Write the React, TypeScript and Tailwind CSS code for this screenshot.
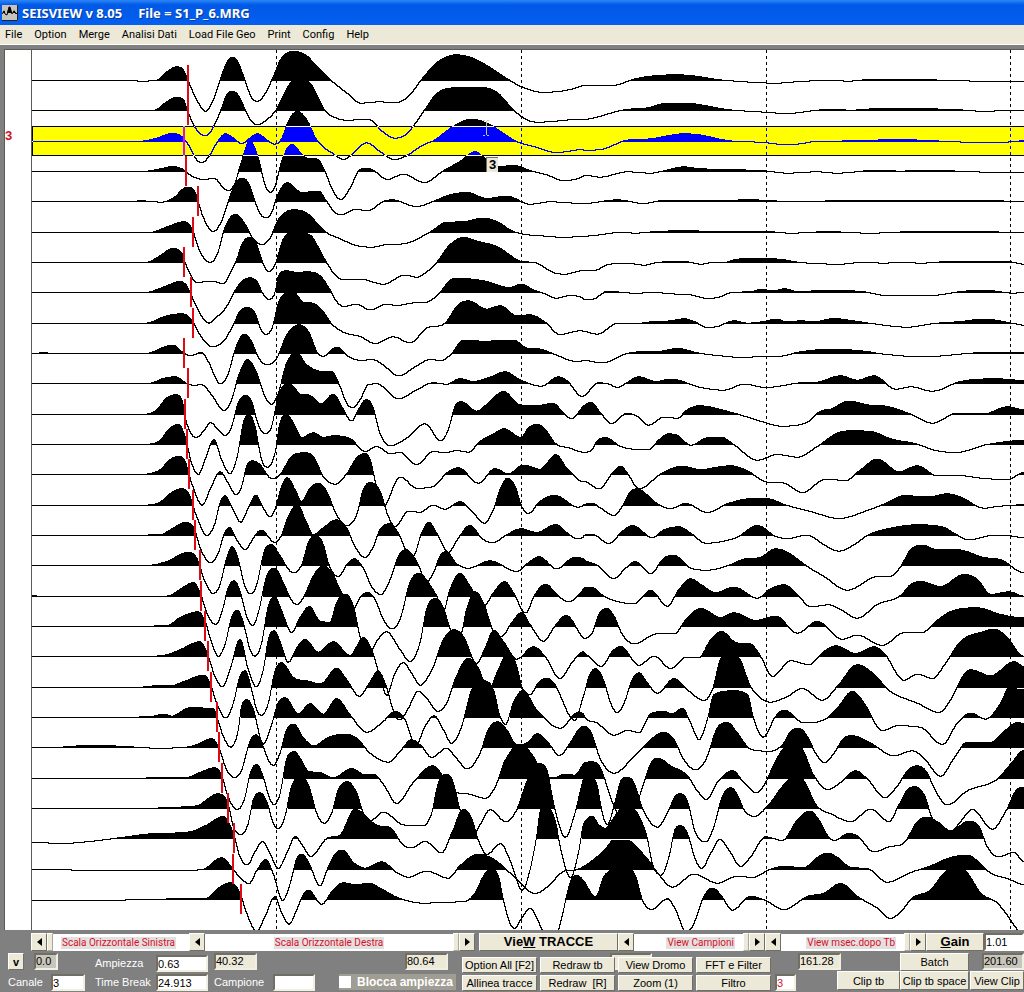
import { useState, type ReactNode } from "react";

// Readings are in thirds of a plot pixel: "x y x y ...".
// `near` starts at plot x 118, `far` at plot x 552; `zero` is the rest level.
type Trace = { zero: number; tb: number; near: string; far: string };

const TRACES: Trace[] = [
  {
    zero: 107,
    tb: 188,
    near: "-354 107 -70 107 -20 109 10 107 25 104 55 78 80 66 100 76 114 107 140 165 167 199 190 165 210 107 230 55 247 37 265 55 285 107 303 155 321 170 340 155 365 107 395 40 433 20 470 33 500 65 540 104 590 144 632 175 690 171 735 174 775 155 815 104 865 50 920 30 975 43 1075 104 1115 126 1175 142 1215 141 1300 122",
    far: "0 121 90 121 150 103 200 94 275 90 320 92 400 104 500 112 575 115 650 110 740 106 790 109 870 103 990 103 1115 108 1320 109",
  },
  {
    zero: 200,
    tb: 188,
    near: "-354 200 -60 200 5 200 20 197 45 178 80 161 100 168 112 200 140 258 167 276 190 250 212 200 230 155 247 142 265 155 287 200 305 233 323 242 345 232 377 200 420 120 452 107 480 118 525 200 560 223 590 229 655 227 700 265 735 283 770 270 800 233 823 200 860 150 920 132 1000 132 1040 145 1092 200 1135 230 1165 235 1300 226",
    far: "0 227 30 222 120 198 190 192 250 178 310 178 350 183 430 197 540 205 610 209 700 199 740 196 800 199 900 193 970 194 1110 197 1210 203 1260 199 1320 200",
  },
  {
    zero: 290,
    tb: 184,
    near: "-354 290 -30 289 20 280 65 266 95 275 115 300 140 345 157 353 180 330 203 290 227 267 250 280 275 296 300 280 322 267 350 285 373 298 393 285 420 220 442 200 470 225 500 285 550 327 582 344 610 325 650 294 690 320 732 344 765 335 820 300 850 288 910 245 965 223 1010 235 1100 290 1150 305 1220 323 1300 314",
    far: "0 316 45 315 130 286 200 282 300 267 345 270 430 287 540 293 600 299 650 297 700 289 850 288 920 283 1050 288 1160 292 1260 292 1320 288",
  },
  {
    zero: 380,
    tb: 186,
    near: "-354 380 -30 380 0 378 40 370 68 365 95 372 125 393 155 403 195 402 220 430 235 437 255 415 270 365 300 289 325 340 345 420 361 443 375 425 395 350 425 299 465 338 505 345 525 380 550 440 572 464 600 430 625 380 652 370 675 380 712 404 760 388 823 413 880 378 930 350 975 321 1010 345 1050 365 1090 362 1140 377 1190 390 1240 407 1300 393",
    far: "0 391 48 397 130 381 200 385 240 378 300 366 340 371 430 374 540 378 610 385 700 381 760 385 870 377 920 377 950 380 980 377 1080 377 1150 381 1320 382",
  },
  {
    zero: 472,
    tb: 198,
    near: "-354 472 -60 472 -25 470 5 472 35 474 50 471 70 462 112 429 135 445 160 520 190 562 215 530 235 472 255 420 277 402 297 420 315 472 330 508 348 521 365 505 380 460 412 416 455 445 505 441 530 472 555 505 573 512 615 496 655 499 700 472 725 467 800 487 850 472 890 455 950 445 1010 463 1070 456 1140 480 1200 473 1300 478",
    far: "0 478 100 467 180 478 230 470 290 470 360 470 500 467 600 471 850 470 1100 470 1200 469 1320 472",
  },
  {
    zero: 563,
    tb: 193,
    near: "-354 563 0 563 15 560 60 543 102 531 125 550 150 620 181 653 205 620 220 563 240 520 258 509 280 530 312 585 337 599 360 580 385 525 430 495 470 505 525 560 570 582 620 602 665 607 710 599 760 597 840 562 890 532 940 531 1000 520 1040 530 1090 560 1200 575 1245 578 1300 574",
    far: "0 574 120 562 150 565 220 560 320 557 380 561 545 560 620 565 740 560 790 563 860 565 1000 560 1190 560 1320 564",
  },
  {
    zero: 653,
    tb: 184,
    near: "-354 653 -20 653 0 650 35 630 68 611 95 625 110 665 140 713 185 709 220 716 245 675 258 650 278 595 297 579 320 600 338 653 356 681 375 660 400 583 430 564 475 568 525 645 555 690 580 705 630 703 700 718 765 691 800 697 825 685 860 653 900 600 940 578 985 590 1040 605 1115 650 1155 653 1210 683 1245 688 1300 677",
    far: "0 677 30 677 70 660 130 655 180 661 220 653 300 650 350 658 390 652 420 654 450 645 530 640 600 645 640 652 770 658 840 652 900 655 950 652 1010 655 1100 650 1270 650 1320 658",
  },
  {
    zero: 68,
    tb: 191,
    near: "-354 68 -20 68 0 66 50 48 88 35 110 48 130 90 155 140 177 160 200 142 230 110 252 68 275 35 300 24 320 35 338 70 356 89 375 68 385 20 410 3 440 8 470 6 510 18 540 60 560 95 582 110 620 103 660 120 710 103 740 107 790 99 830 97 870 68 900 32 920 25 1000 33 1080 53 1115 43 1150 60 1180 70 1220 85 1260 77 1300 86",
    far: "0 88 25 88 70 65 110 67 160 71 200 67 260 72 320 75 370 86 400 83 450 67 500 66 530 59 570 63 600 57 640 65 740 61 840 66 900 76 1050 76 1140 64 1210 62 1290 70 1320 67",
  },
  {
    zero: 161,
    tb: 193,
    near: "-354 161 -30 161 0 158 50 138 95 132 125 150 150 195 185 230 220 215 250 165 270 125 292 113 315 130 333 180 348 194 368 170 385 100 405 72 430 68 460 97 490 101 515 120 545 162 580 187 630 200 675 221 730 201 780 219 830 175 885 160 925 105 955 93 1010 118 1050 108 1100 138 1140 135 1185 157 1230 194 1290 183",
    far: "0 184 40 193 100 161 150 162 200 156 260 153 300 147 330 155 370 173 400 170 450 153 490 160 540 155 575 148 610 156 650 153 690 156 750 146 800 152 870 162 970 172 1050 161 1130 155 1200 148 1290 161 1320 166",
  },
  {
    zero: 250,
    tb: 184,
    near: "-354 250 -320 248 -280 250 -30 250 0 248 40 232 68 225 100 248 120 257 155 247 175 275 211 341 235 310 255 240 282 192 305 215 325 262 352 284 380 265 410 195 448 164 475 185 505 252 520 258 560 231 600 262 630 270 670 269 700 285 745 317 800 287 840 268 875 271 905 250 940 210 1000 213 1090 210 1130 234 1170 237 1220 255 1275 273 1300 272",
    far: "0 271 55 278 130 250 190 244 215 245 280 235 340 248 400 256 480 262 540 258 580 259 650 245 740 237 840 243 900 252 1020 260 1150 250 1210 246 1320 248",
  },
  {
    zero: 341,
    tb: 188,
    near: "-354 341 0 340 40 326 75 321 110 341 130 346 155 345 185 375 222 422 245 390 265 320 293 270 320 310 345 380 365 403 385 370 410 280 440 250 470 285 510 304 545 305 570 350 590 400 608 413 630 390 655 345 680 342 745 387 800 360 850 339 890 343 930 327 970 335 1020 322 1065 306 1110 330 1175 349 1225 321 1250 332 1297 380",
    far: "0 378 45 339 75 343 100 353 125 341 165 321 215 335 260 328 350 353 420 361 480 343 545 353 650 339 700 337 770 318 820 331 870 318 935 358 980 351 1045 364 1130 335 1240 327 1320 332",
  },
  {
    zero: 434,
    tb: 185,
    near: "-354 434 -20 434 20 420 50 385 75 375 95 390 110 460 138 503 160 485 182 459 205 480 226 497 245 470 265 400 288 377 305 395 325 465 346 491 365 470 385 380 410 342 430 350 450 373 480 377 513 403 550 373 575 410 605 453 625 420 648 390 668 410 690 490 720 528 770 505 825 462 872 513 895 480 915 410 935 396 980 424 1020 395 1060 365 1110 405 1160 407 1210 401 1240 430 1265 446 1300 410",
    far: "0 408 22 398 50 430 82 461 130 430 160 440 193 466 240 442 280 445 310 420 345 408 450 430 540 457 590 469 670 457 710 424 740 418 795 394 850 405 910 410 980 433 1045 460 1120 430 1200 432 1270 411 1320 420",
  },
  {
    zero: 524,
    tb: 187,
    near: "-354 524 -10 523 30 512 60 475 85 464 105 500 125 580 145 614 165 570 192 510 215 570 240 611 262 560 280 460 297 434 315 470 335 570 352 592 375 550 390 460 410 434 430 460 455 503 490 489 520 503 550 498 600 506 645 545 680 530 720 551 750 548 800 584 850 545 885 549 920 542 955 547 990 515 1035 490 1062 477 1113 503 1135 475 1160 464 1185 478 1215 520 1260 535 1300 547",
    far: "0 547 20 543 45 508 65 504 110 530 150 538 195 539 225 510 255 492 280 497 320 526 370 504 410 502 450 525 520 571 580 554 640 562 700 530 760 490 800 483 860 485 920 507 1000 523 1050 541 1115 548 1210 524 1320 512",
  },
  {
    zero: 614,
    tb: 189,
    near: "-354 614 -20 614 0 611 30 600 60 570 85 560 105 575 125 640 157 706 180 660 210 606 235 640 257 674 275 650 290 590 308 573 330 585 365 626 390 615 425 560 465 549 490 560 520 620 555 643 590 612 620 565 645 551 660 570 680 650 703 707 715 690 735 640 752 622 800 655 850 650 890 610 925 594 985 640 1035 597 1075 612 1120 586 1170 598 1218 555 1250 595 1300 635",
    far: "0 635 45 657 85 610 110 590 130 610 165 657 230 613 295 589 350 600 400 592 440 588 490 603 545 636 600 640 655 668 725 628 785 632 830 600 880 568 945 606 1000 588 1060 618 1120 617 1200 626 1270 629 1320 608",
  },
  {
    zero: 47,
    tb: 193,
    near: "-354 47 -20 46 30 37 60 12 95 -3 115 10 140 80 170 137 195 100 210 40 225 18 245 50 272 97 295 55 318 17 340 55 360 80 378 50 395 -10 412 -36 435 0 455 35 480 -5 505 -20 530 5 560 75 590 107 620 75 640 0 662 -22 690 5 715 80 735 110 775 65 810 67 850 46 885 58 930 36 970 70 1003 100 1030 60 1050 0 1073 -35 1095 -10 1115 50 1135 71 1170 35 1215 17 1285 52 1300 47",
    far: "0 45 25 41 50 55 90 77 115 50 140 5 160 -3 185 12 220 42 260 56 305 41 370 68 430 42 500 26 540 25 610 47 680 65 765 86 850 62 900 43 960 18 1040 20 1090 12 1130 22 1200 55 1240 50 1320 45",
  },
  {
    zero: 137,
    tb: 195,
    near: "-354 137 30 135 65 118 105 98 130 112 155 185 182 218 205 190 222 135 238 113 260 150 286 180 310 145 333 121 375 158 395 135 415 80 442 45 470 100 490 135 515 118 560 90 590 115 615 170 645 203 670 170 690 120 718 102 745 130 770 185 790 197 815 130 837 98 860 130 895 187 925 145 960 107 995 145 1027 159 1070 135 1113 117 1160 128 1218 104 1250 128 1280 146 1300 142",
    far: "0 137 25 134 75 161 115 125 145 107 205 143 240 120 285 111 320 130 365 160 460 142 520 107 575 140 610 146 670 136 720 165 765 184 810 165 850 137 920 115 1000 105 1080 113 1110 130 1155 150 1230 136 1270 137 1320 143",
  },
  {
    zero: 227,
    tb: 200,
    near: "-354 227 0 226 50 215 115 188 140 205 165 275 190 311 210 285 230 205 247 171 265 210 285 290 303 312 320 285 345 180 365 165 385 190 430 249 455 225 475 160 495 135 520 165 535 220 565 261 590 225 612 207 640 235 665 290 692 314 720 270 745 200 768 180 800 215 830 275 850 250 870 200 888 185 920 222 955 235 1020 213 1100 245 1140 215 1167 201 1220 237 1275 202 1300 208",
    far: "0 210 40 227 90 266 125 235 153 215 200 251 240 205 270 197 320 235 370 241 430 228 480 208 530 202 575 177 605 185 670 230 720 260 790 301 880 260 920 259 950 230 980 180 1015 166 1060 180 1120 180 1200 203 1250 210 1320 248",
  },
  {
    zero: 321,
    tb: 201,
    near: "-354 319 -310 321 0 322 60 318 90 300 130 280 150 310 175 380 197 405 215 370 235 295 252 274 270 305 290 380 308 407 325 370 350 260 373 236 400 280 420 325 440 345 460 325 490 260 520 228 545 250 580 320 612 355 630 325 652 309 675 330 700 390 725 418 750 390 780 280 808 251 835 280 860 320 880 365 900 300 930 252 960 290 1000 352 1030 310 1065 277 1090 310 1127 370 1155 315 1187 284 1220 315 1255 337 1300 300",
    far: "0 297 20 293 60 320 100 336 150 343 200 303 250 350 285 300 320 268 350 285 395 309 450 293 520 326 560 298 600 286 640 315 680 352 735 346 770 360 820 386 880 345 950 318 980 285 1010 276 1070 291 1140 255 1180 270 1220 315 1275 307 1320 320",
  },
  {
    zero: 411,
    tb: 205,
    near: "-354 411 50 409 90 385 143 367 165 395 185 460 205 500 225 465 245 385 262 363 280 400 300 480 315 500 335 460 355 350 375 323 395 365 425 429 450 385 478 352 510 395 540 398 560 340 587 315 610 350 630 440 655 500 680 455 710 427 750 480 780 516 810 460 830 360 857 327 880 355 905 425 932 432 950 360 975 307 1000 340 1030 425 1055 440 1085 400 1115 370 1140 405 1180 455 1215 410 1248 378 1300 445",
    far: "0 446 25 430 45 375 68 357 90 380 115 435 150 463 220 433 270 433 310 385 350 357 410 384 450 370 515 393 575 380 640 431 700 396 775 449 820 437 895 468 960 430 1010 430 1070 385 1100 366 1180 355 1250 375 1320 385",
  },
  {
    zero: 500,
    tb: 208,
    near: "-354 500 0 499 50 495 90 480 150 456 175 500 195 560 217 590 240 540 270 449 295 540 318 590 340 540 355 450 373 423 390 455 415 517 440 475 465 449 505 487 550 456 600 497 640 444 665 480 690 560 710 616 735 550 760 519 785 550 810 586 850 530 880 450 912 420 940 440 980 521 1005 475 1032 422 1060 455 1100 508 1150 471 1185 500 1230 566 1265 520 1300 486",
    far: "0 488 20 505 52 530 85 485 110 470 165 526 210 499 260 536 305 503 345 503 380 450 412 425 455 458 500 463 530 500 565 560 620 513 675 524 720 485 755 468 815 491 870 471 900 490 960 571 1000 553 1045 566 1085 520 1130 455 1200 425 1230 418 1265 438 1320 500",
  },
  {
    zero: 593,
    tb: 211,
    near: "-354 592 -30 592 20 588 60 588 110 572 160 556 180 580 200 640 227 684 250 640 270 560 285 543 305 600 320 660 335 677 355 640 375 545 395 519 430 563 470 573 512 582 560 536 590 570 628 619 655 585 685 545 705 580 735 675 750 690 775 655 805 604 830 625 863 664 890 640 915 570 955 506 985 535 1015 600 1045 540 1075 485 1100 530 1115 590 1140 614 1165 580 1190 565 1215 585 1260 680 1275 692 1300 620",
    far: "0 615 15 560 35 537 60 575 80 640 100 668 120 640 145 570 165 549 190 580 220 610 270 567 310 600 360 632 385 600 412 505 437 495 465 505 500 590 560 637 610 620 655 596 715 631 760 590 820 525 860 545 920 605 1000 640 1065 668 1100 630 1140 555 1160 540 1220 558 1290 516 1320 530",
  },
  {
    zero: 683,
    tb: 217,
    near: "-354 683 0 681 40 673 65 679 120 654 190 657 202 685 220 740 243 772 265 720 275 650 292 630 310 660 340 763 360 720 385 640 405 624 445 672 480 642 520 673 560 627 600 675 650 727 700 695 735 665 765 690 797 767 825 710 852 678 880 720 905 760 935 710 965 600 1000 573 1030 600 1050 680 1067 703 1090 640 1118 602 1160 660 1230 715 1285 668 1300 672",
    far: "0 678 40 700 90 736 130 722 165 728 200 672 240 665 265 672 295 656 320 700 345 749 370 690 390 615 450 603 490 615 510 690 537 742 575 680 600 661 660 699 720 690 760 655 805 605 840 640 880 710 895 722 940 708 1010 713 1075 764 1120 700 1160 670 1205 688 1250 640 1275 595 1320 600",
  },
  {
    zero: 113,
    tb: 219,
    near: "-354 113 -270 112 -170 106 -60 111 20 115 80 114 130 108 185 87 205 110 230 180 255 203 275 180 300 95 318 75 335 100 355 150 370 167 390 130 410 60 432 44 460 85 492 108 535 83 580 73 620 85 660 130 715 157 750 125 785 90 815 110 845 143 890 115 915 140 952 177 990 130 1015 60 1043 36 1070 60 1100 105 1130 100 1163 72 1195 100 1228 137 1260 100 1290 55",
    far: "0 50 20 65 50 150 90 190 150 140 200 90 238 68 270 90 300 150 335 180 365 150 400 55 430 38 460 70 500 118 560 124 595 105 625 60 645 56 670 80 695 130 722 159 750 130 780 85 805 78 860 100 930 138 985 123 1020 145 1070 199 1110 145 1150 97 1220 98 1260 65 1300 39 1320 40",
  },
  {
    zero: 203,
    tb: 222,
    near: "-354 202 80 201 120 198 150 185 195 171 215 195 235 260 262 296 285 260 300 190 320 161 340 200 358 260 372 281 390 250 410 145 433 123 455 150 475 182 510 185 550 201 605 173 645 192 670 191 700 220 740 278 790 215 848 165 885 205 915 245 950 248 1005 262 1035 230 1065 150 1110 102 1145 130 1180 190 1215 200 1245 190 1275 193 1300 160",
    far: "0 158 20 153 45 165 90 285 125 340 160 275 185 200 205 150 222 143 260 165 310 195 340 240 367 266 400 215 445 180 480 215 517 246 545 215 570 160 600 112 625 100 650 108 690 195 730 236 770 215 815 180 850 205 903 260 940 225 975 175 1000 165 1025 180 1060 250 1090 282 1150 240 1240 205 1280 160 1320 120",
  },
  {
    zero: 296,
    tb: 228,
    near: "-354 296 0 295 80 292 140 288 205 252 235 285 250 350 272 374 295 340 310 270 330 249 350 275 370 340 385 356 405 320 425 230 452 202 475 225 500 310 523 340 545 310 565 240 592 216 620 250 640 310 660 333 700 307 760 345 820 348 845 310 865 220 890 193 910 220 930 300 965 385 990 345 1020 300 1068 336 1100 300 1135 205 1168 162 1190 180 1215 300 1246 382 1275 310 1300 210",
    far: "0 207 15 200 40 230 55 310 70 345 90 290 110 215 130 202 150 220 175 295 220 352 250 310 275 258 290 252 310 275 335 370 365 396 390 350 415 260 440 234 460 255 480 300 510 320 550 290 600 225 630 203 650 205 700 290 740 312 800 335 860 298 915 335 945 285 970 240 993 231 1020 255 1045 325 1095 372 1130 335 1165 299 1225 358 1265 305 1300 238 1320 233",
  },
  {
    zero: 385,
    tb: 234,
    near: "-354 396 -270 400 -180 394 -100 384 0 371 120 365 170 345 220 319 250 370 270 440 292 464 315 425 338 394 360 430 385 475 410 430 436 380 460 410 482 439 530 385 570 375 615 298 680 345 720 352 760 405 785 413 825 394 875 428 905 370 940 298 965 325 985 390 1010 433 1052 401 1080 450 1117 540 1140 480 1160 380 1172 300 1190 290 1215 330 1235 430 1262 502 1285 430 1300 345",
    far: "0 340 23 318 45 345 65 355 85 330 115 296 145 296 175 340 190 385 205 460 232 495 255 440 275 355 290 347 310 370 335 450 353 475 380 430 408 388 435 420 470 469 500 440 545 380 595 391 640 330 677 303 705 330 730 375 750 391 795 370 820 378 870 425 915 410 960 398 1000 335 1030 321 1060 335 1100 362 1155 333 1185 350 1210 410 1242 440 1290 427 1320 455",
  },
  {
    zero: 476,
    tb: 233,
    near: "-354 476 -200 478 0 480 70 480 160 475 215 441 245 470 270 500 297 518 320 480 347 446 370 490 398 569 420 520 440 445 457 430 480 465 510 525 530 480 555 430 578 418 610 455 645 472 695 453 740 485 775 499 830 481 895 502 930 465 985 430 1030 445 1090 495 1155 548 1190 530 1245 480 1280 477 1300 468",
    far: "0 467 60 420 90 388 125 388 190 445 220 485 265 529 330 490 400 517 460 496 505 500 560 475 600 467 660 470 700 440 730 427 760 440 800 470 850 473 910 514 980 485 1040 465 1100 440 1150 433 1180 450 1220 487 1270 503 1320 521",
  },
  {
    zero: 569,
    tb: 241,
    near: "-354 571 0 570 60 567 170 565 205 535 240 519 270 550 290 610 320 665 345 620 375 561 395 610 418 643 440 600 460 555 475 541 515 583 550 540 580 519 620 525 655 520 690 535 740 562 820 580 890 577 945 575 975 550 1000 500 1020 478 1045 500 1060 570 1080 640 1095 655 1115 625 1140 595 1165 635 1190 690 1210 700 1235 625 1260 520 1280 497 1300 512",
    far: "0 515 35 561 60 500 75 485 90 476 135 476 155 500 175 570 203 599 250 567 275 600 305 665 325 650 360 560 385 535 410 555 445 601 500 560 540 570 600 599 670 560 720 550 770 521 820 560 880 595 920 626 955 600 985 565 1040 540 1080 490 1115 470 1150 490 1190 550 1240 580 1300 660 1320 690",
  },
];

const PLOT_W = 992;
const PLOT_H = 880;
const GRID_X = [244, 489, 734, 978];

const baseline = (row: number) => 30 + Math.round(row * 30.33);

function readings(trace: Trace) {
  const parse = (text: string, start: number) => {
    const n = text.split(" ").map(Number);
    const out: [number, number][] = [];
    for (let i = 0; i < n.length; i += 2) {
      out.push([start + n[i] / 3, (n[i + 1] - trace.zero) / 3]);
    }
    return out;
  };
  return [...parse(trace.near, 118), ...parse(trace.far, 552)];
}

// monotone cubic, one value per pixel column
function sample(points: [number, number][]) {
  const d = points
    .slice(1)
    .map((p, i) => (p[1] - points[i][1]) / (p[0] - points[i][0]));
  const m = points.map((_, i) => {
    if (i === 0 || i === points.length - 1) return 0;
    if (d[i - 1] * d[i] <= 0) return 0;
    const limit = 3 * Math.min(Math.abs(d[i - 1]), Math.abs(d[i]));
    const mean = (d[i - 1] + d[i]) / 2;
    return Math.sign(mean) * Math.min(Math.abs(mean), limit);
  });
  const ys: number[] = [];
  let k = 0;
  for (let x = 0; x <= PLOT_W; x++) {
    while (k < points.length - 2 && x > points[k + 1][0]) k++;
    const h = points[k + 1][0] - points[k][0];
    const t = Math.min(1, (x - points[k][0]) / h);
    const t2 = t * t;
    const t3 = t2 * t;
    ys.push(
      (2 * t3 - 3 * t2 + 1) * points[k][1] +
        (t3 - 2 * t2 + t) * h * m[k] +
        (3 * t2 - 2 * t3) * points[k + 1][1] +
        (t3 - t2) * h * m[k + 1],
    );
  }
  return ys.map((y) => Math.round(y));
}

const WIGGLES = TRACES.map((trace, row) => {
  const base = baseline(row);
  const ys = sample(readings(trace));
  const line = ys.map((y, x) => `${x},${base + y + 0.5}`).join(" ");
  let fill = "";
  let open = false;
  ys.forEach((y, x) => {
    if (y < 0) {
      fill += open ? `L${x} ${base + y}` : `M${x} ${base + 1}L${x} ${base + y}`;
      open = true;
    } else if (open) {
      fill += `L${x} ${base + 1}Z`;
      open = false;
    }
  });
  if (open) fill += `L${PLOT_W} ${base + 1}Z`;
  return { base, line, fill, tb: trace.tb - 33 };
});

function Seismogram({ selected }: { selected: number }) {
  const top = baseline(selected - 1) - 15;
  return (
    <svg
      viewBox={`0 0 ${PLOT_W} ${PLOT_H}`}
      className="isolate block h-auto w-full"
      shapeRendering="crispEdges"
      role="img"
      aria-label="Tracce"
    >
      <rect width={PLOT_W} height={PLOT_H} fill="#fff" />
      {GRID_X.map((x) => (
        <line
          key={x}
          x1={x + 0.5}
          x2={x + 0.5}
          y1={0}
          y2={PLOT_H}
          stroke="#000"
          strokeDasharray="3 3"
        />
      ))}
      {WIGGLES.map((w) => (
        <g key={w.base}>
          <path d={w.fill} />
          <polyline points={w.line} fill="none" stroke="#000" />
        </g>
      ))}
      {WIGGLES.map((w) => (
        <rect
          key={w.base}
          x={w.tb}
          y={w.base - 15}
          width={2}
          height={30}
          fill="#e00a14"
        />
      ))}
      <rect
        className="mix-blend-difference"
        x={1}
        y={top + 1}
        width={PLOT_W}
        height={28}
        fill="#00f"
      />
      <rect
        className="mix-blend-difference"
        x={0.5}
        y={top + 0.5}
        width={PLOT_W + 2}
        height={29}
        fill="none"
        stroke="#fff"
      />
      {/* text cursor */}
      <path
        d="M451 70.5h2M455 70.5h2M454.5 71v14M451 85.5h2M455 85.5h2"
        stroke="#c8c49a"
        fill="none"
      />
    </svg>
  );
}

function Button({
  className = "",
  children,
}: {
  className?: string;
  children: ReactNode;
}) {
  return (
    <button
      type="button"
      className={`flex shrink-0 items-center justify-center whitespace-nowrap border border-t-white border-l-white border-r-[#716f64] border-b-[#716f64] bg-[#ece9d8] ${className}`}
    >
      {children}
    </button>
  );
}

function Arrow({ dir }: { dir: "left" | "right" }) {
  return (
    <button
      type="button"
      aria-label={dir}
      className="flex w-4 shrink-0 items-center justify-center border border-t-white border-l-white border-r-[#716f64] border-b-[#716f64] bg-[#ece9d8]"
    >
      <svg width="5" height="8" viewBox="0 0 5 8">
        <path d={dir === "left" ? "M5 0v8L0 4z" : "M0 0v8l5-4z"} />
      </svg>
    </button>
  );
}

function Thumb() {
  return (
    <div className="w-1.5 shrink-0 border border-t-white border-l-white border-r-[#aca899] border-b-[#aca899] bg-[#ece9d8]" />
  );
}

function Track({
  className,
  children,
}: {
  className: string;
  children: ReactNode;
}) {
  return (
    <div
      className={`flex basis-0 items-center border-t border-[#808080] bg-white font-[Roboto,sans-serif] text-[10px] leading-3 text-[#d4102a] ${className}`}
    >
      <span className="mx-2 bg-[#e4e0e0] px-px whitespace-nowrap">
        {children}
      </span>
    </div>
  );
}

const sunken =
  "h-[17px] shrink-0 border-2 border-t-[#716f64] border-l-[#716f64] border-r-[#f1efe2] border-b-[#f1efe2] leading-3";

function Value({
  className,
  children,
}: {
  className: string;
  children?: ReactNode;
}) {
  return (
    <output className={`${sunken} block whitespace-nowrap ${className}`}>
      {children}
    </output>
  );
}

const MENU = [
  "File",
  "Option",
  "Merge",
  "Analisi Dati",
  "Load File Geo",
  "Print",
  "Config",
  "Help",
];

export default function App() {
  const [channel, setChannel] = useState("3");
  const [locked, setLocked] = useState(false);
  const selected = Math.min(TRACES.length, Math.max(1, Number(channel) || 1));

  return (
    <div className="flex min-h-screen flex-col bg-[#808080] font-['Liberation_Sans',sans-serif] text-[11px] leading-3 text-black">
      <header className="flex h-[25px] items-center gap-1 bg-linear-to-b from-[#2a86f8] via-[#0058e6] via-20% to-[#0560f0] pl-0.5 font-['Noto_Sans',sans-serif] text-[13px] font-bold text-white">
        <svg width="16" height="16" viewBox="0 0 16 16" className="shrink-0">
          <rect width="16" height="16" fill="#c6c3bc" />
          <path d="M15.5 0v15.5H0" fill="none" stroke="#222" />
          <path d="M0 9l2-3 1 3 2 1 2-8h1l2 7 2-3 2 3 2-2" fill="none" stroke="#000" />
          <path d="M5 8l2-6h1l2 6zM1 8l1-3 1 3zM11 8l1-3 2 3z" />
        </svg>
        <h1 className="flex gap-4 whitespace-pre [text-shadow:1px_1px_#0a3a9a]">
          <span>SEISVIEW v 8.05</span>
          <span>File = S1_P_6.MRG</span>
        </h1>
      </header>

      <nav className="flex h-5 items-center gap-3 border-b border-white bg-[#ece9d8] pl-[5px] font-[Roboto,sans-serif] text-[11px]">
        {MENU.map((item) => (
          <button key={item} type="button" className="whitespace-nowrap">
            {item}
          </button>
        ))}
      </nav>

      <main className="mt-1 flex">
        <aside className="ml-1 w-[27px] shrink-0 border-t border-l border-[#5c5a52] bg-white text-[#d01020]">
          <div className="mt-20 text-[13px] leading-3 font-bold">{selected}</div>
        </aside>
        <div className="relative min-w-0 flex-1 border-t border-l border-[#5c5a52]">
          <Seismogram selected={selected} />
          <div className="absolute top-[107px] left-[454px] border-t border-l border-[#716f64] bg-[#ece9d8] px-0.5 text-[13px] leading-[14px] font-bold">
            3
          </div>
        </div>
      </main>

      <section className="mt-[3px] ml-[31px] flex h-[18px]">
        <Arrow dir="left" />
        <Thumb />
        <Track className="grow-[136]">Scala Orizzontale Sinistra</Track>
        <Arrow dir="left" />
        <Track className="grow-[248] justify-center">
          Scala Orizzontale Destra
        </Track>
        <Thumb />
        <Arrow dir="right" />
        <Button className="ml-1 w-[139px] text-[13px] font-bold">
          <span className="whitespace-pre">
            Vie<u>W</u> TRACCE
          </span>
        </Button>
        <Arrow dir="left" />
        <Track className="grow-[109] justify-end">View Campioni</Track>
        <Thumb />
        <Arrow dir="right" />
        <Arrow dir="left" />
        <Track className="grow-[123] justify-end">View msec.dopo Tb</Track>
        <Thumb />
        <Arrow dir="right" />
        <Button className="w-[58px] text-[13px] font-bold">
          <span>
            <u>G</u>ain
          </span>
        </Button>
        <input
          aria-label="Gain"
          defaultValue="1.01"
          className="w-10 shrink-0 border-2 border-t-[#716f64] border-l-[#716f64] border-r-white border-b-white bg-white"
        />
      </section>

      <section className="flex pt-0.5 pl-2">
        <div className="flex w-[77px] shrink-0 flex-col gap-1">
          <div className="flex gap-2.5">
            <Button className="h-[17px] w-4 font-bold">v</Button>
            <Value className="w-6 bg-[#c8c5bc]">0.0</Value>
          </div>
          <div className="flex justify-between">
            <label htmlFor="canale" className="leading-4 text-white">
              Canale
            </label>
            <input
              id="canale"
              value={channel}
              onChange={(e) => setChannel(e.target.value)}
              className={`${sunken} w-[34px] bg-white`}
            />
          </div>
        </div>

        <div className="ml-2.5 grid shrink-0 grid-cols-[61px_52px] content-start gap-y-0.5 pt-0.5">
          <label htmlFor="ampiezza" className="leading-4 text-white">
            Ampiezza
          </label>
          <input
            id="ampiezza"
            defaultValue="0.63"
            className={`${sunken} w-[52px] bg-white`}
          />
          <label htmlFor="timebreak" className="leading-4 text-white">
            Time Break
          </label>
          <input
            id="timebreak"
            defaultValue="24.913"
            className={`${sunken} w-[52px] bg-white`}
          />
        </div>

        <div className="ml-1.5 flex w-[101px] shrink-0 flex-col gap-1">
          <Value className="w-[43px] bg-[#ece9d8]">40.32</Value>
          <div className="flex justify-between">
            <label htmlFor="campione" className="leading-4 text-white">
              Campione
            </label>
            <input id="campione" className={`${sunken} w-[42px] bg-white`} />
          </div>
        </div>

        <div className="ml-auto flex w-[117px] shrink-0 flex-col items-end gap-1">
          <Value className="mr-2 w-[43px] bg-[#ece9d8]">80.64</Value>
          <label className="flex h-4 w-full items-center gap-1.5 bg-[#a09d94] text-xs font-bold whitespace-nowrap text-white">
            <input
              type="checkbox"
              checked={locked}
              onChange={(e) => setLocked(e.target.checked)}
              className="size-3 shrink-0 appearance-none bg-white checked:bg-black"
            />
            Blocca ampiezza
          </label>
        </div>

        <div className="relative isolate ml-1.5 grid shrink-0 grid-cols-[75px_75px_75px_75px] content-start gap-x-[3px] gap-y-0.5 pt-1">
          <Value className="absolute top-0 left-[148px] -z-10 w-[42px] bg-[#ece9d8]" />
          <Button className="h-4">Option All [F2]</Button>
          <Button className="h-4">Redraw tb</Button>
          <Button className="h-4">View Dromo</Button>
          <Button className="h-4">FFT e Filter</Button>
          <Button className="h-4">Allinea tracce</Button>
          <Button className="h-4 whitespace-pre">{"Redraw  [R]"}</Button>
          <Button className="h-4">Zoom (1)</Button>
          <Button className="h-4">Filtro</Button>
        </div>

        <input
          aria-label="Traccia"
          defaultValue="3"
          className={`${sunken} ml-1 w-[21px] self-end bg-white text-[#d4102a]`}
        />

        <div className="ml-0.5 flex w-[102px] shrink-0 flex-col gap-px">
          <Value className="w-[43px] bg-[#ece9d8]">161.28</Value>
          <Button className="h-[19px] w-[63px] self-end">Clip tb</Button>
        </div>

        <div className="flex w-[69px] shrink-0 flex-col">
          <Button className="h-[18px]">Batch</Button>
          <Button className="h-[19px]">Clip tb space</Button>
        </div>

        <div className="ml-px flex w-[54px] shrink-0 flex-col items-end gap-px">
          <Value className="w-[42px] bg-[#c8c5bc]">201.60</Value>
          <Button className="h-[19px] w-full">View Clip</Button>
        </div>
      </section>
    </div>
  );
}
